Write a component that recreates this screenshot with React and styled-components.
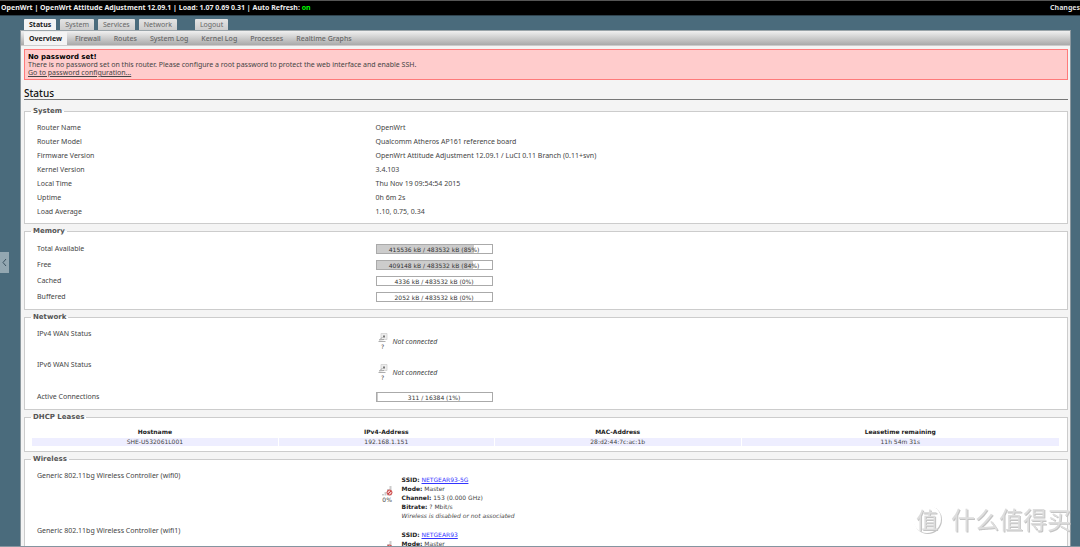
import React from 'react';
import styled, { createGlobalStyle, css } from 'styled-components';

const sans = '"Noto Sans", "DejaVu Sans", sans-serif';
const wide = '"DejaVu Sans", Verdana, sans-serif';

const GlobalStyle = createGlobalStyle`
  html {
    scrollbar-width: none;
  }

  body {
    margin: 0;
    background: #4a6b7c;
    color: #444;
    font: 7px/8px ${sans};
  }

  * {
    box-sizing: border-box;
  }
`;

const TopBar = styled.header`
  display: flex;
  justify-content: space-between;
  height: 16px;
  padding: 0 0 0 1px;
  border-top: 1px solid #555;
  border-bottom: 1px solid #2f434e;
  background: #000;
  color: #eee;
  font: bold 7px/14px ${sans};
  white-space: pre;
`;

const RefreshLink = styled.a`
  color: #0f0;
  text-decoration: none;
`;

const ChangesLink = styled.a`
  color: #ddd;
  text-decoration: none;
`;

const Page = styled.div`
  margin: 3px 9px 0 20px;
`;

const Tabs = styled.nav`
  display: flex;
  gap: 4px;
  padding-left: 4px;
`;

const Tab = styled.a`
  height: 11px;
  padding: 0 5px;
  border-radius: 1px 1px 0 0;
  background: ${({ $active }) => ($active ? '#f4f4f4' : 'linear-gradient(#e4e4e4, #ccc)')};
  color: ${({ $active }) => ($active ? '#222' : '#666')};
  font: ${({ $active }) => ($active ? 'bold' : 'normal')} 7px/12px ${sans};
  text-decoration: none;

  ${({ $apart }) => $apart && css`
    margin-left: 14px;
  `}
`;

const Panel = styled.main`
  border: 1px solid #8b979e;
  border-top-color: #9aa4a9;
  border-bottom: 0;
  background: #f4f4f4;
`;

const SubTabs = styled.nav`
  display: flex;
  align-items: flex-end;
  height: 15px;
  padding-left: 3px;
  border-bottom: 1px solid #ccc;
  background: linear-gradient(#f0f0f0, #aaa);
`;

const SubTab = styled.a`
  height: 13px;
  margin-right: 3px;
  padding: 0 5px;
  background: ${({ $active }) => ($active ? '#f4f4f4' : 'transparent')};
  color: ${({ $active }) => ($active ? '#222' : '#666')};
  font: ${({ $active }) => ($active ? 'bold' : '500')} 7px/14px ${sans};
  text-decoration: none;
`;

const Content = styled.div`
  padding: 3px 2px 0 3px;
`;

const Warning = styled.section`
  padding: 3px 3px 2px;
  border: 1px solid #ff7a7a;
  background: #fcc;
`;

const WarningTitle = styled.h4`
  margin: 0;
  color: #000;
  font: bold 7px/8px ${wide};
`;

const WarningText = styled.p`
  margin: 0;
`;

const WarningLink = styled.a`
  display: block;
  color: #444;
`;

const Title = styled.h2`
  margin: 7px 0;
  border-bottom: 1px solid #777;
  color: #111;
  font: 500 10px/12px ${sans};
`;

const Fieldset = styled.fieldset`
  min-width: 0;
  margin: 0 0 3px;
  padding: ${({ $table }) => ($table ? '5px 7px 5px 6px' : '5px 7px 4px 12px')};
  border: 1px solid #ccc;
  background: #fff;
`;

const Legend = styled.legend`
  margin-left: ${({ $table }) => ($table ? '0' : '-6px')};
  padding: 0 2px;
  color: #555;
  font: bold 7px/9px ${wide};
`;

const Row = styled.div`
  display: grid;
  grid-template-columns: 33% 1fr;
  column-gap: 1px;
  min-height: ${({ $height }) => $height || 14}px;
  padding-top: 3px;
`;

const MeterRow = styled(Row)`
  align-items: center;
  min-height: 16px;
  padding: 0 0 1px;
`;

const Meter = styled.div`
  position: relative;
  width: 117px;
  height: 10px;
  border: 1px solid #aaa;
  color: #333;
  font: 6px/9px ${wide};
  text-align: center;
`;

const MeterFill = styled.div`
  position: absolute;
  inset: 0 auto 0 0;
  background: #ccc;
`;

const MeterText = styled.span`
  position: relative;
`;

const WanState = styled.div`
  display: flex;
  align-items: center;
  gap: 5px;
  height: 24px;
  padding-left: 2px;
  font-style: italic;
`;

const IconStack = styled.div`
  display: flex;
  flex-direction: column;
  align-items: center;
  font: 6px/8px ${wide};
`;

const Leases = styled.table`
  width: 100%;
  border-collapse: separate;
  border-spacing: 1px 0;
  table-layout: fixed;
  color: #444;
  font: 6px/8px ${wide};
  text-align: center;

  th {
    padding: 1px 0 2px;
    color: #222;
  }

  td {
    padding: 0;
    background: #eef;
  }
`;

const Radio = styled.div`
  display: flex;
  align-items: center;
  gap: 9px;
  padding: 0 0 2px 6px;
  font: 6px/9px ${wide};

  ${IconStack} {
    padding-bottom: 4px;
  }
`;

const RadioInfo = styled.div`
  strong {
    color: #222;
  }

  a {
    color: #33f;
  }
`;

const SideHandle = styled.button`
  position: fixed;
  top: 252px;
  left: 0;
  width: 9px;
  height: 21px;
  padding: 0;
  border: 0;
  background: #93a7b1;
  line-height: 0;
`;

const Watermark = styled.div`
  position: fixed;
  right: 9px;
  bottom: 14px;
  display: flex;
  align-items: center;
  gap: 10px;
  color: #ddd;
  font: 24px/28px "Noto Sans CJK SC", sans-serif;
  text-shadow: 1px 1px 0 #c4c4c4;
`;

const WatermarkSeal = styled.span`
  width: 28px;
  height: 28px;
  border-radius: 50%;
  box-shadow: 1px 1px 0 #c4c4c4;
  font-size: 22px;
  line-height: 26px;
  text-align: center;
`;

const BottomEdge = styled.div`
  position: fixed;
  inset: auto 0 0;
  height: 1px;
  background: #8595a0;
`;

const EthernetIcon = () => (
  <svg width="10" height="10" viewBox="0 0 10 10" aria-hidden="true">
    <path d="M3 .5h6v6H3z" fill="#eee" stroke="#ccc" strokeWidth=".7" />
    <path d="M5 2.500h2v2H5z" fill="#777" />
    <path d="M4.500 4 1.500 7M.5 8.500h7M1 7l5-.5" fill="none" stroke="#999" strokeWidth=".8" />
  </svg>
);

const SignalIcon = () => (
  <svg width="11" height="10" viewBox="0 0 11 10" aria-hidden="true">
    <path d="M0 9.500V8h2v1.500zM2.500 9.500V6h2v3.500zM5 9.500V3h2v6.500zM7.500 9.500V0h2v9.500z" fill="#ccc" />
    <circle cx="7.500" cy="6.500" r="2.500" fill="#f0c0c0" stroke="#c44" strokeWidth="1" />
    <path d="m6 8 3-3" stroke="#c44" strokeWidth="1" />
  </svg>
);

const tabs = ['Status', 'System', 'Services', 'Network', 'Logout'];
const subTabs = ['Overview', 'Firewall', 'Routes', 'System Log', 'Kernel Log', 'Processes', 'Realtime Graphs'];

const system = [
  ['Router Name', 'OpenWrt'],
  ['Router Model', 'Qualcomm Atheros AP161 reference board'],
  ['Firmware Version', 'OpenWrt Attitude Adjustment 12.09.1 / LuCI 0.11 Branch (0.11+svn)'],
  ['Kernel Version', '3.4.103'],
  ['Local Time', 'Thu Nov 19 09:54:54 2015'],
  ['Uptime', '0h 6m 2s'],
  ['Load Average', '1.10, 0.75, 0.34'],
];

const memory = [
  ['Total Available', 415536, 85],
  ['Free', 409148, 84],
  ['Cached', 4336, 0],
  ['Buffered', 2052, 0],
];

const radios = [
  { device: 'wifi0', ssid: 'NETGEAR93-5G', channel: '153 (0.000 GHz)' },
  { device: 'wifi1', ssid: 'NETGEAR93', channel: '11 (0.000 GHz)' },
];

const Progress = ({ percent, children }) => (
  <Meter>
    <MeterFill style={{ width: `${percent}%` }} />
    <MeterText>{children}</MeterText>
  </Meter>
);

const App = () => (
  <>
    <GlobalStyle />
    <TopBar>
      <div>
        OpenWrt | OpenWrt Attitude Adjustment 12.09.1 | Load: 1.07 0.69 0.31 | Auto Refresh:{' '}
        <RefreshLink href="#refresh">on</RefreshLink>
      </div>
      <ChangesLink href="#changes">Changes</ChangesLink>
    </TopBar>
    <Page>
      <Tabs>
        {tabs.map(name => (
          <Tab key={name} href={`#${name}`} $active={name === 'Status'} $apart={name === 'Logout'}>
            {name}
          </Tab>
        ))}
      </Tabs>
      <Panel>
        <SubTabs>
          {subTabs.map(name => (
            <SubTab key={name} href={`#${name}`} $active={name === 'Overview'}>{name}</SubTab>
          ))}
        </SubTabs>
        <Content>
          <Warning>
            <WarningTitle>No password set!</WarningTitle>
            <WarningText>
              There is no password set on this router. Please configure a root password to protect
              the web interface and enable SSH.
            </WarningText>
            <WarningLink href="#password">Go to password configuration...</WarningLink>
          </Warning>
          <Title>Status</Title>
          <Fieldset>
            <Legend>System</Legend>
            {system.map(([label, value]) => (
              <Row key={label}>
                <span>{label}</span>
                <span>{value}</span>
              </Row>
            ))}
          </Fieldset>
          <Fieldset>
            <Legend>Memory</Legend>
            {memory.map(([label, used, percent]) => (
              <MeterRow key={label}>
                <span>{label}</span>
                <Progress percent={percent}>{`${used} kB / 483532 kB (${percent}%)`}</Progress>
              </MeterRow>
            ))}
          </Fieldset>
          <Fieldset>
            <Legend>Network</Legend>
            {['IPv4', 'IPv6'].map(version => (
              <Row key={version} $height={31}>
                <span>{`${version} WAN Status`}</span>
                <WanState>
                  <IconStack>
                    <EthernetIcon />
                    <span>?</span>
                  </IconStack>
                  Not connected
                </WanState>
              </Row>
            ))}
            <MeterRow>
              <span>Active Connections</span>
              <Progress percent={1}>311 / 16384 (1%)</Progress>
            </MeterRow>
          </Fieldset>
          <Fieldset $table>
            <Legend $table>DHCP Leases</Legend>
            <Leases>
              <colgroup>
                <col width="24%" />
                <col width="21%" />
                <col width="24%" />
                <col width="31%" />
              </colgroup>
              <thead>
                <tr>
                  <th>Hostname</th>
                  <th>IPv4-Address</th>
                  <th>MAC-Address</th>
                  <th>Leasetime remaining</th>
                </tr>
              </thead>
              <tbody>
                <tr>
                  <td>SHE-U532061L001</td>
                  <td>192.168.1.151</td>
                  <td>28:d2:44:7c:ac:1b</td>
                  <td>11h 54m 31s</td>
                </tr>
              </tbody>
            </Leases>
          </Fieldset>
          <Fieldset>
            <Legend>Wireless</Legend>
            {radios.map(({ device, ssid, channel }) => (
              <Row key={device} $height={55}>
                <span>{`Generic 802.11bg Wireless Controller (${device})`}</span>
                <Radio>
                  <IconStack>
                    <SignalIcon />
                    <span>0%</span>
                  </IconStack>
                  <RadioInfo>
                    <div><strong>SSID:</strong> <a href={`#${ssid}`}>{ssid}</a></div>
                    <div><strong>Mode:</strong> Master</div>
                    <div><strong>Channel:</strong> {channel}</div>
                    <div><strong>Bitrate:</strong> ? Mbit/s</div>
                    <em>Wireless is disabled or not associated</em>
                  </RadioInfo>
                </Radio>
              </Row>
            ))}
          </Fieldset>
        </Content>
      </Panel>
    </Page>
    <SideHandle type="button" aria-label="Open side panel">
      <svg width="7" height="9" viewBox="0 0 7 9" aria-hidden="true">
        <path d="M5 1 2 4.500 5 8" fill="none" stroke="#3c5361" strokeWidth="1" />
      </svg>
    </SideHandle>
    <Watermark>
      <WatermarkSeal>值</WatermarkSeal>
      <span>什么值得买</span>
    </Watermark>
    <BottomEdge />
  </>
);

export default App;
